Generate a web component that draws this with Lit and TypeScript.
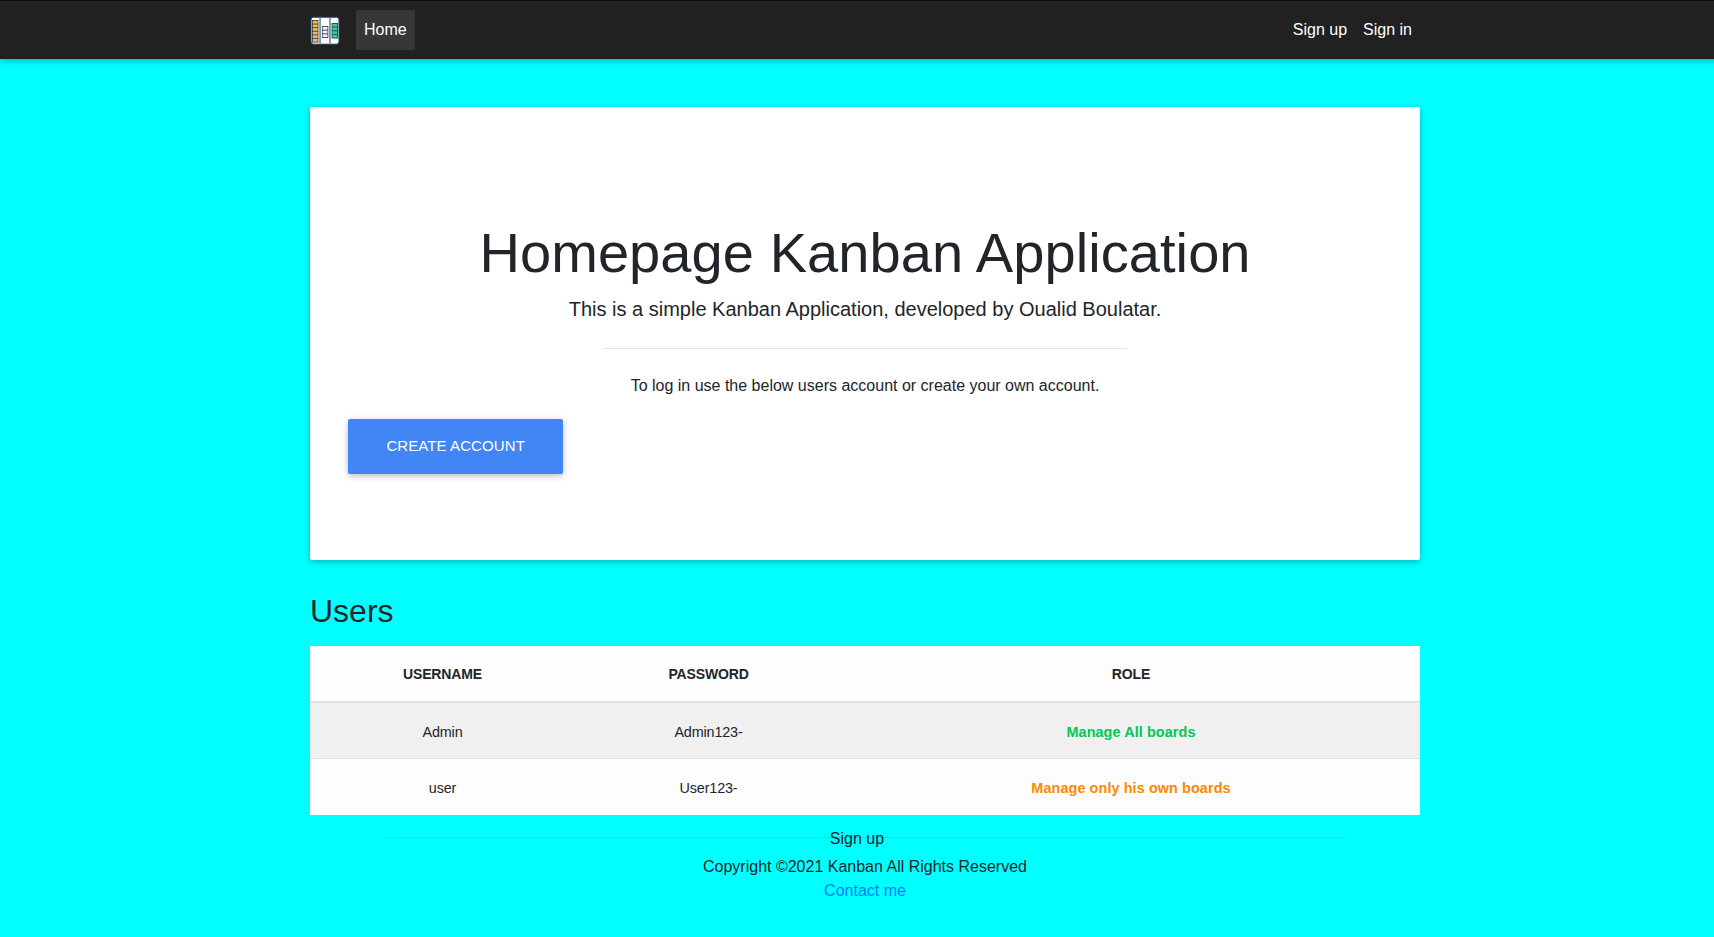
import { LitElement, html, svg, css } from "lit";
import { customElement } from "lit/decorators.js";

interface User {
  name: string;
  password: string;
  role: string;
  tone: string;
}

const USERS: User[] = [
  { name: "Admin", password: "Admin123-", role: "Manage All boards", tone: "success" },
  { name: "user", password: "User123-", role: "Manage only his own boards", tone: "warning" },
];

@customElement("kanban-logo")
class KanbanLogo extends LitElement {
  static styles = css`
    :host { display: block; width: 30px; height: 30px; }
    svg { display: block; }
  `;

  // One board column: a dark frame holding evenly spaced cards.
  private stack(x: number, y: number, count: number, pitch: number, fill: string) {
    return svg`
      <rect x=${x} y=${y} width="6.4" height=${count * pitch + 0.9} fill="#2b4459"></rect>
      ${Array.from({ length: count }, (_, i) => svg`
        <rect x=${x + 0.8} y=${y + 0.9 + i * pitch} width="4.8" height=${pitch - 0.9} fill=${fill}></rect>`)}
    `;
  }

  render() {
    return html`<svg width="30" height="30" viewBox="0 0 30 30">
      <rect x="1" y="2.2" width="28" height="27" rx="2.4" fill="#fff" stroke="#1f3b54" stroke-width="1"></rect>
      <rect x="9.1" y="2.7" width="1.9" height="26" fill="#8799a8"></rect>
      <rect x="19" y="2.7" width="1.9" height="26" fill="#8799a8"></rect>
      ${this.stack(2, 5, 6, 3.6, "#fdb94a")}
      ${this.stack(11.9, 11, 3, 3.7, "#f4f7fa")}
      ${this.stack(21.6, 8, 4, 3.65, "#35cf9c")}
    </svg>`;
  }
}

@customElement("app-root")
class AppRoot extends LitElement {
  static styles = css`
    :host {
      display: block;
      height: 937px;
      overflow: hidden;
      color: #212529;
      font: 400 16px/1.5 "Liberation Sans", Arial, sans-serif;
    }
    * { box-sizing: border-box; }
    a { text-decoration: none; color: inherit; }
    .page { width: 1730px; height: 100%; background: #00ffff; }
    .wrap { width: 1110px; margin: 0 auto; }
    .nav {
      height: 59px;
      background: #212121;
      border-top: 1px solid #0c0c0c;
      box-shadow: 0 2px 5px rgba(0, 0, 0, 0.16), 0 2px 10px rgba(0, 0, 0, 0.12);
    }
    .bar { display: flex; align-items: center; height: 58px; color: #fff; }
    .brand { margin-right: 16px; }
    .link { padding: 8px; }
    .active { background: rgba(255, 255, 255, 0.1); }
    .links { display: flex; margin-left: auto; }
    .card {
      margin-top: 48px;
      padding: 112px 32px 80px;
      background: #fff;
      border-radius: 2px;
      text-align: center;
      box-shadow: 0 2px 5px rgba(0, 0, 0, 0.16), 0 2px 10px rgba(0, 0, 0, 0.12);
    }
    h1 { margin: 0 0 8px; font-size: 56px; font-weight: 300; line-height: 1.2; letter-spacing: 0.08px; }
    .lead { margin: 0; font-size: 20px; font-weight: 300; line-height: 30px; }
    .rule { width: 50%; height: 1px; margin: 24px auto; background: rgba(0, 0, 0, 0.1); }
    .hint { margin: 0 0 15px; padding-top: 1px; }
    .actions { display: flex; padding: 6px; }
    .button {
      padding: 16px 38.4px;
      border-radius: 2px;
      background: #4285f4;
      color: #fff;
      font-size: 15.04px;
      letter-spacing: 0.07px;
      text-transform: uppercase;
      box-shadow: 0 2px 5px rgba(0, 0, 0, 0.16), 0 2px 10px rgba(0, 0, 0, 0.12);
    }
    h2 { margin: 32px 0 16px; font-size: 32px; font-weight: 400; line-height: 1.2; }
    table {
      width: 100%;
      table-layout: fixed;
      border-collapse: separate;
      border-spacing: 0;
      background: #fdfdfd;
      font-size: 14.4px;
      line-height: 21.6px;
      text-align: center;
    }
    .col-name { width: 265px; }
    .col-pass { width: 267px; }
    th {
      padding: 17.6px 0 15.8px;
      font-weight: 700;
      font-size: 14px;
      letter-spacing: -0.15px;
      border-bottom: 2px solid #dee2e6;
      text-transform: uppercase;
    }
    td { padding: 18.4px 0 15px; letter-spacing: -0.15px; }
    .odd td { background: #f0f0f0; }
    .even td { padding-bottom: 16px; border-top: 1px solid #dee2e6; }
    td.success, td.warning { font-weight: 700; letter-spacing: 0.1px; }
    .success { color: #00c851; }
    .warning { color: #ff8800; }
    footer { text-align: center; padding-top: 22px; }
    .line { width: 960px; height: 1px; margin: 0 auto -11px; background: rgba(0, 0, 0, 0.1); }
    .signup { display: block; margin: 0 16px 4px 0; line-height: 24px; }
    .copy { line-height: 24px; }
    .contact { color: #007bff; }
  `;

  render() {
    return html`
      <div class="page">
        <header class="nav">
          <nav class="wrap bar">
            <a class="brand"><kanban-logo></kanban-logo></a>
            <a class="link active">Home</a>
            <div class="links"><a class="link">Sign up</a><a class="link">Sign in</a></div>
          </nav>
        </header>
        <main class="wrap">
          <section class="card">
            <h1>Homepage Kanban Application</h1>
            <p class="lead">This is a simple Kanban Application, developed by Oualid Boulatar.</p>
            <div class="rule"></div>
            <p class="hint">To log in use the below users account or create your own account.</p>
            <div class="actions"><a class="button">Create account</a></div>
          </section>
          <h2>Users</h2>
          <table>
            <colgroup><col class="col-name" /><col class="col-pass" /><col /></colgroup>
            <thead><tr><th>Username</th><th>Password</th><th>Role</th></tr></thead>
            <tbody>
              ${USERS.map((u, i) => html`<tr class=${i % 2 ? "even" : "odd"}>
                <td>${u.name}</td><td>${u.password}</td><td class=${u.tone}>${u.role}</td>
              </tr>`)}
            </tbody>
          </table>
        </main>
        <footer class="wrap">
          <div class="line"></div>
          <a class="signup">Sign up</a>
          <div class="copy">Copyright ©2021 Kanban All Rights Reserved</div>
          <a class="contact">Contact me</a>
        </footer>
      </div>
    `;
  }
}
